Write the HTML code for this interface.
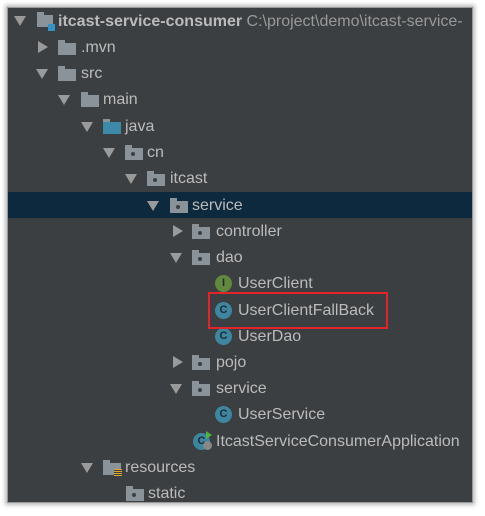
<!DOCTYPE html>
<html><head><style>
body{margin:0;width:485px;height:516px;background:#fff;position:relative;overflow:hidden;font-family:"Liberation Sans","Noto Sans CJK SC",sans-serif}
.panel{position:absolute;left:7px;top:7px;width:466px;height:496px;background:#3c3f41;box-shadow:0 0 4px 2px #bbb;border:1px solid #999;box-sizing:border-box}
.sel{position:absolute;left:8px;top:192px;width:464px;height:26px;background:#0d293e}
.r{position:absolute;height:26px;line-height:28px;color:#bbbbbb;font-size:16px;white-space:nowrap}
.a{position:absolute;width:0;height:0}
.down{border-left:6px solid transparent;border-right:6px solid transparent;border-top:10px solid #9a9a9a}
.right{border-top:6px solid transparent;border-bottom:6px solid transparent;border-left:10px solid #9a9a9a}
.f{position:absolute;width:18px;height:12px;background:#8a9399}
.f:before{content:"";position:absolute;left:0;top:-3px;width:7px;height:3px;background:#8a9399}
.f.p:after{content:"";position:absolute;left:6px;top:4px;width:4px;height:4px;border-radius:2px;background:#3c3f41}
.c{position:absolute;width:17px;height:17px;border-radius:9px;background:#3e86a0;color:#1e2b33;font-size:11px;font-weight:bold;text-align:center;line-height:17px}
.box{position:absolute;left:208px;top:292px;width:180px;height:37px;border:2px solid #e5232a;box-sizing:border-box}
</style></head><body>
<div class="panel"></div>
<div class="sel"></div>

<div class="a down" style="left:14px;top:16px"></div>
<div class="f" style="left:37px;top:15px;width:16px"></div>
<div style="position:absolute;left:48px;top:24px;width:7px;height:7px;background:#3592c4"></div>
<div class="r" style="left:58px;top:8px;font-weight:bold">itcast-service-consumer <span style="font-weight:normal;color:#999">C:\project\demo\itcast-service-</span></div>

<div class="a right" style="left:38px;top:41px"></div>
<div class="f" style="left:58px;top:43px"></div>
<div class="r" style="left:81px;top:34px">.mvn</div>

<div class="a down" style="left:36px;top:69px"></div>
<div class="f" style="left:58px;top:69px"></div>
<div class="r" style="left:81px;top:60px">src</div>

<div class="a down" style="left:58px;top:95px"></div>
<div class="f" style="left:81px;top:95px"></div>
<div class="r" style="left:103px;top:86px">main</div>

<div class="a down" style="left:81px;top:122px"></div>
<div class="f" style="left:103px;top:122px;background:#3d8aa8"></div>
<div class="r" style="left:125px;top:113px">java</div>

<div class="a down" style="left:103px;top:148px"></div>
<div class="f p" style="left:125px;top:148px"></div>
<div class="r" style="left:147px;top:139px">cn</div>

<div class="a down" style="left:125px;top:174px"></div>
<div class="f p" style="left:147px;top:174px"></div>
<div class="r" style="left:170px;top:165px">itcast</div>

<div class="a down" style="left:147px;top:201px"></div>
<div class="f p" style="left:170px;top:201px"></div>
<div class="r" style="left:192px;top:192px">service</div>

<div class="a right" style="left:173px;top:225px"></div>
<div class="f p" style="left:192px;top:227px"></div>
<div class="r" style="left:216px;top:218px">controller</div>

<div class="a down" style="left:170px;top:253px"></div>
<div class="f p" style="left:192px;top:253px"></div>
<div class="r" style="left:216px;top:244px">dao</div>

<div class="c" style="left:215px;top:275px;background:#62883e">I</div>
<div class="r" style="left:238px;top:270px">UserClient</div>
<div class="c" style="left:215px;top:302px">C</div>
<div class="r" style="left:238px;top:297px">UserClientFallBack</div>
<div class="c" style="left:215px;top:328px">C</div>
<div class="r" style="left:238px;top:323px">UserDao</div>
<div class="box"></div>

<div class="a right" style="left:173px;top:356px"></div>
<div class="f p" style="left:192px;top:358px"></div>
<div class="r" style="left:216px;top:349px">pojo</div>

<div class="a down" style="left:170px;top:384px"></div>
<div class="f p" style="left:192px;top:384px"></div>
<div class="r" style="left:216px;top:375px">service</div>

<div class="c" style="left:215px;top:406px">C</div>
<div class="r" style="left:238px;top:401px">UserService</div>

<div class="c" style="left:193px;top:433px">C</div>
<div style="position:absolute;left:203px;top:441px;width:9px;height:9px;border-radius:5px;background:#888"></div>
<div style="position:absolute;left:206px;top:431px;border-top:4px solid transparent;border-bottom:4px solid transparent;border-left:6px solid #4fb33e"></div>
<div class="r" style="left:216px;top:428px">ItcastServiceConsumerApplication</div>

<div class="a down" style="left:81px;top:463px"></div>
<div class="f" style="left:103px;top:463px"></div>
<div style="position:absolute;left:114px;top:469px;width:8px;height:7px;background:repeating-linear-gradient(#e0a526 0 1px,#3c3f41 1px 2px)"></div>
<div class="r" style="left:125px;top:454px">resources</div>

<div class="f p" style="left:126px;top:489px"></div>
<div class="r" style="left:148px;top:480px">static</div>
</body></html>
